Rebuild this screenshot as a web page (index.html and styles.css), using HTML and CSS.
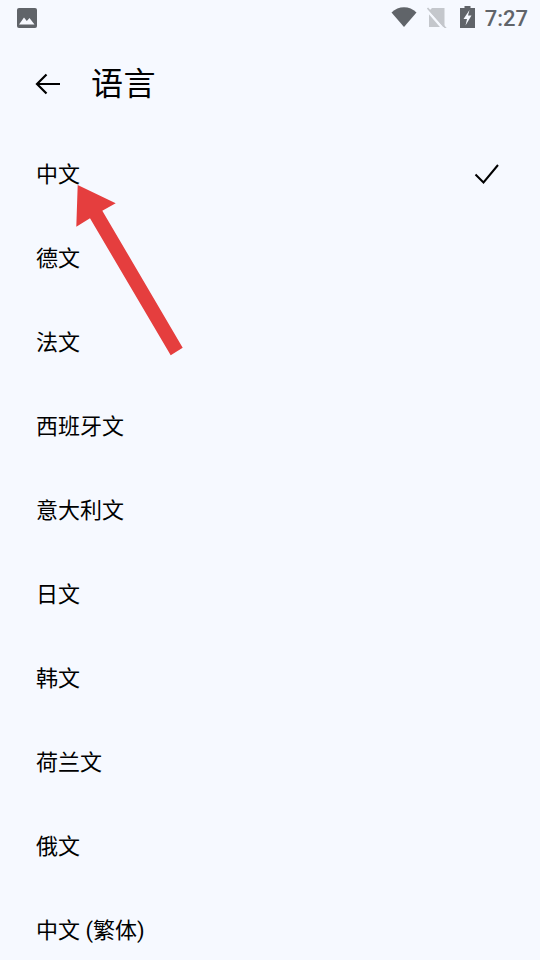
FILE: index.html
```html
<!DOCTYPE html>
<html lang="zh">
<head>
    <meta charset="UTF-8">
    <meta name="viewport" content="width=device-width, initial-scale=1.0">
    <title>语言</title>
    <link rel="stylesheet" href="styles.css">
</head>
<body>
    <div class="screen">
        <div class="status-bar">
            <svg class="status-image" width="22" height="22" viewBox="0 0 22 22">
                <rect x="1" y="1" width="20" height="20" rx="2" fill="#606469"/>
                <path d="M3 17.5 L8 10.5 L10.8 14 L13.5 11 L18.5 17.5 Z" fill="#f7f9ff"/>
            </svg>
            <div class="status-right">
                <svg class="status-icon" width="26" height="22" viewBox="0 0 26 22">
                    <path d="M0.5 6.5 C7.5 -0.5 18.5 -0.5 25.5 6.5 L13 21 Z" fill="#606469"/>
                </svg>
                <svg class="status-icon sim" width="20" height="22" viewBox="0 0 20 22">
                    <path d="M5 2 H17.5 V21 H2 V5 Z" fill="#c4c7cc"/>
                    <path d="M0 4 L18 25" stroke="#f6f9ff" stroke-width="2.5"/>
                    <path d="M0.5 2 L19.5 23" stroke="#c4c7cc" stroke-width="1.6"/>
                </svg>
                <svg class="status-icon" width="15" height="22" viewBox="0 0 15 22">
                    <path d="M4.5 0 H10.5 V2 H15 V22 H0 V2 H4.5 Z" fill="#606469"/>
                    <path d="M9.5 4 L3.5 13 H7 L5.5 19.5 L11.5 9.5 H8 Z" fill="#f6f9ff"/>
                </svg>
                <span class="status-time">7:27</span>
            </div>
        </div>

        <div class="toolbar">
            <svg class="back-icon" width="26" height="24" viewBox="0 0 26 24">
                <path d="M25 12 H2 M11.5 2.5 L2 12 L11.5 21.5" fill="none" stroke="#000" stroke-width="2.2"/>
            </svg>
            <h1 class="title">语言</h1>
        </div>

        <ul class="lang-list">
            <li class="lang-item">中文
                <svg class="check" width="26" height="22" viewBox="0 0 26 22">
                    <path d="M1.5 11.5 L9.5 19.5 L24 2" fill="none" stroke="#000" stroke-width="2"/>
                </svg>
            </li>
            <li class="lang-item">德文</li>
            <li class="lang-item">法文</li>
            <li class="lang-item">西班牙文</li>
            <li class="lang-item">意大利文</li>
            <li class="lang-item">日文</li>
            <li class="lang-item">韩文</li>
            <li class="lang-item">荷兰文</li>
            <li class="lang-item">俄文</li>
            <li class="lang-item">中文 (繁体)</li>
        </ul>

        <svg class="arrow" width="540" height="960" viewBox="0 0 540 960">
            <path d="M77.7 185 L115.7 203.3 L102.3 210.7 L182.7 347.7 L170.7 355.3 L90 218.3 L76.3 226.7 Z" fill="#e53e3e"/>
        </svg>
    </div>
</body>
</html>
```

FILE: styles.css
```css
* { box-sizing: border-box; }
html, body { margin: 0; padding: 0; }
body { background: #f6f9ff; font-family: Roboto, "Noto Sans CJK SC", sans-serif; color: #000; }
.screen { position: relative; width: 540px; height: 960px; overflow: hidden; }

.status-bar { display: flex; align-items: center; justify-content: space-between; height: 36px; padding: 0 12px 0 16px; }
.status-right { display: flex; align-items: center; gap: 10px; }
.status-time { font-size: 22px; font-weight: 500; color: #606469; }
.status-bar svg { display: block; }
.status-icon { margin-bottom: 2px; }
.sim { margin-right: 3px; }

.toolbar { display: flex; align-items: center; height: 94px; padding: 2px 0 0 35px; }
.back-icon { display: block; flex: none; }
.title { margin: 0 0 0 30px; font-size: 32px; font-weight: 400; line-height: 1; letter-spacing: 0.5px; }

.lang-list { list-style: none; margin: 0; padding: 0; }
.lang-item { display: flex; align-items: center; justify-content: space-between; height: 84px; padding: 0 40px 0 36px; font-size: 22px; }
.check { position: relative; top: 2px; }

.arrow { position: absolute; left: 0; top: 0; pointer-events: none; }
```
